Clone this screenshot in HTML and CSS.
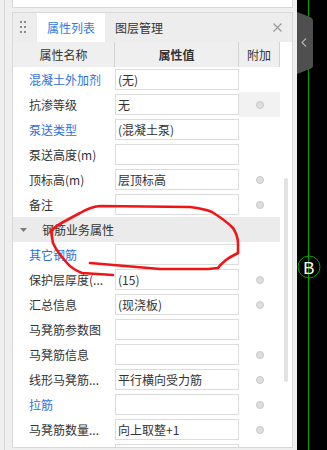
FILE: index.html
```html
<!DOCTYPE html>
<html lang="zh">
<head>
<meta charset="utf-8">
<link rel="stylesheet" href="styles.css">
</head>
<body>
<div class="app">
  <div class="lstrip"><div class="lline"></div></div>
  <div class="main">
    <div class="toppanel"></div>
    <div class="panel">
      <div class="tabbar">
        <div class="handle">
          <svg width="6" height="13" viewBox="0 0 6 13"><g fill="#8a8a8a"><rect x="0" y="0" width="2" height="2"/><rect x="4" y="0" width="2" height="2"/><rect x="0" y="5" width="2" height="2"/><rect x="4" y="5" width="2" height="2"/><rect x="0" y="10" width="2" height="2"/><rect x="4" y="10" width="2" height="2"/></g></svg>
        </div>
        <div class="tab active">属性列表</div>
        <div class="tab">图层管理</div>
        <div class="close">
          <svg width="9" height="9" viewBox="0 0 9 9"><path d="M0.5,0.5 L8.5,8.5 M8.5,0.5 L0.5,8.5" stroke="#9a9a9a" stroke-width="1.2" fill="none"/></svg>
        </div>
      </div>
      <div class="body">
        <div class="table">
          <div class="thead">
            <div class="th">属性名称</div>
            <div class="th bold">属性值</div>
            <div class="th">附加</div>
          </div>
          <div class="rows">
            <div class="row"><div class="lbl blue">混凝土外加剂</div><div class="val">(无)</div><div class="ext"></div></div>
            <div class="row"><div class="lbl">抗渗等级</div><div class="val">无</div><div class="ext shade"><span class="dot"></span></div></div>
            <div class="row"><div class="lbl blue">泵送类型</div><div class="val">(混凝土泵)</div><div class="ext"></div></div>
            <div class="row"><div class="lbl">泵送高度(m)</div><div class="val"></div><div class="ext"></div></div>
            <div class="row"><div class="lbl">顶标高(m)</div><div class="val">层顶标高</div><div class="ext"><span class="dot"></span></div></div>
            <div class="row"><div class="lbl">备注</div><div class="val"></div><div class="ext"><span class="dot"></span></div></div>
            <div class="section">
              <svg class="tri" width="7" height="4" viewBox="0 0 7 4"><path d="M0,0 L7,0 L3.5,4 Z" fill="#7a7a7a"/></svg>
              <span>钢筋业务属性</span>
            </div>
            <div class="row"><div class="lbl blue">其它钢筋</div><div class="val"></div><div class="ext"></div></div>
            <div class="row"><div class="lbl">保护层厚度(...</div><div class="val">(15)</div><div class="ext"><span class="dot"></span></div></div>
            <div class="row"><div class="lbl">汇总信息</div><div class="val">(现浇板)</div><div class="ext"><span class="dot"></span></div></div>
            <div class="row"><div class="lbl">马凳筋参数图</div><div class="val"></div><div class="ext"></div></div>
            <div class="row"><div class="lbl">马凳筋信息</div><div class="val"></div><div class="ext"><span class="dot"></span></div></div>
            <div class="row"><div class="lbl">线形马凳筋...</div><div class="val">平行横向受力筋</div><div class="ext"><span class="dot"></span></div></div>
            <div class="row"><div class="lbl blue">拉筋</div><div class="val"></div><div class="ext"><span class="dot"></span></div></div>
            <div class="row"><div class="lbl">马凳筋数量...</div><div class="val">向上取整+1</div><div class="ext"><span class="dot"></span></div></div>
            <div class="row"><div class="lbl"></div><div class="val"></div><div class="ext"></div></div>
          </div>
        </div>
        <div class="scroll"><div class="thumb"></div></div>
      </div>
    </div>
  </div>
  <div class="gap"></div>
  <div class="canvas">
    <svg width="30" height="450" viewBox="0 0 30 450">
      <line x1="11.5" y1="0" x2="11.5" y2="450" stroke="#00a400" stroke-width="1"/>
      <path d="M0,12 L13,17 Q16,18 16,21 L16,66 Q16,68 13,69 L0,74 Z" fill="#4f4f4f"/>
      <path d="M9,38.5 L5,42.5 L9,46.5" stroke="#b0b0b0" stroke-width="1.2" fill="none"/>
      <circle cx="12" cy="267" r="11" stroke="#00a400" stroke-width="1" fill="none"/>
      <text x="12" y="273.5" fill="#ffffff" font-family="Liberation Sans, Arial, sans-serif" font-size="17" text-anchor="middle">B</text>
    </svg>
  </div>
</div>
<svg class="scribble" width="327" height="450" viewBox="0 0 327 450">
  <path d="M113,275 L82,273 Q72,269 67,263 Q57,252 53,243 L51,231 Q57,225 67,220 L80,213 Q90,207 100,206 L190,207 Q205,209 212,212 Q225,220 233,228 Q238,236 238,243 L238,253 Q230,257 226,260 Q220,265 218,268 L208,269 L160,269 L90,263" stroke="#f01414" stroke-width="2.6" fill="none" stroke-linecap="round" stroke-linejoin="round"/>
</svg>
</body>
</html>
```

FILE: styles.css
```css
* { box-sizing: border-box; }
html, body { margin: 0; padding: 0; }
body {
  width: 327px;
  height: 450px;
  overflow: hidden;
  position: relative;
  background: #efefef;
  font-family: "Noto Sans CJK SC", "Microsoft YaHei", sans-serif;
  font-size: 12px;
  color: #333;
}
.app { display: flex; height: 450px; }

.lstrip { width: 12px; position: relative; }
.lline { margin-left: 4px; width: 1px; height: 450px; background: #d6d6d6; }

.main { width: 281px; display: flex; flex-direction: column; }
.toppanel {
  height: 8px;
  background: #fff;
  border: 1px solid #d8d8d8;
  border-top: 0;
}
.panel {
  margin-top: 4px;
  height: 436px;
  border: 1px solid #d8d8d8;
  background: #fff;
  display: flex;
  flex-direction: column;
  overflow: hidden;
}
.tabbar {
  height: 29px;
  flex: none;
  background: #ededed;
  display: flex;
  align-items: stretch;
}
.handle { width: 24px; padding-left: 7px; padding-top: 8px; }
.handle svg { display: block; }
.tab {
  padding: 0 10px;
  display: flex;
  align-items: center;
  color: #333;
}
.tab.active { background: #fff; color: #2f7be6; }
.close {
  margin-left: auto;
  padding-right: 10px;
  display: flex;
  align-items: center;
}
.close svg { display: block; }

.body { flex: 1; display: flex; overflow: hidden; }
.table { width: 267px; flex: none; }
.thead {
  display: grid;
  grid-template-columns: 102px 124px 41px;
  height: 25px;
  background: #efefef;
}
.th {
  border-right: 1px solid #d3d3d3;
  display: flex;
  align-items: center;
  justify-content: center;
  color: #333;
}
.th.bold { font-weight: 700; }

.row {
  display: grid;
  grid-template-columns: 102px 124px 41px;
  height: 25px;
  align-items: center;
}
.lbl {
  padding-left: 16px;
  white-space: nowrap;
  overflow: hidden;
  color: #333;
}
.lbl.blue { color: #2b6fe0; }
.val {
  height: 21px;
  border: 1px solid #dcdcdc;
  padding-left: 2px;
  display: flex;
  align-items: center;
  white-space: nowrap;
  overflow: hidden;
  background: #fff;
}
.ext {
  height: 25px;
  display: flex;
  align-items: center;
  justify-content: center;
}
.ext.shade { background: #f2f2f2; }
.dot {
  width: 8px;
  height: 8px;
  border-radius: 50%;
  background: #dedede;
  border: 1px solid #c8c8c8;
}
.section {
  height: 25px;
  background: #ebebeb;
  display: flex;
  align-items: center;
  padding-left: 7px;
  color: #333;
}
.tri { margin-right: 15px; display: block; }

.scroll { width: 12px; padding-left: 4px; }
.thumb {
  width: 4px;
  height: 204px;
  margin-top: 136px;
  background: #e3e3e3;
  border-radius: 2px;
}

.gap { width: 4px; }
.canvas { width: 30px; background: #000; }
.canvas svg { display: block; }

.scribble {
  position: absolute;
  left: 0;
  top: 0;
  pointer-events: none;
}
```
